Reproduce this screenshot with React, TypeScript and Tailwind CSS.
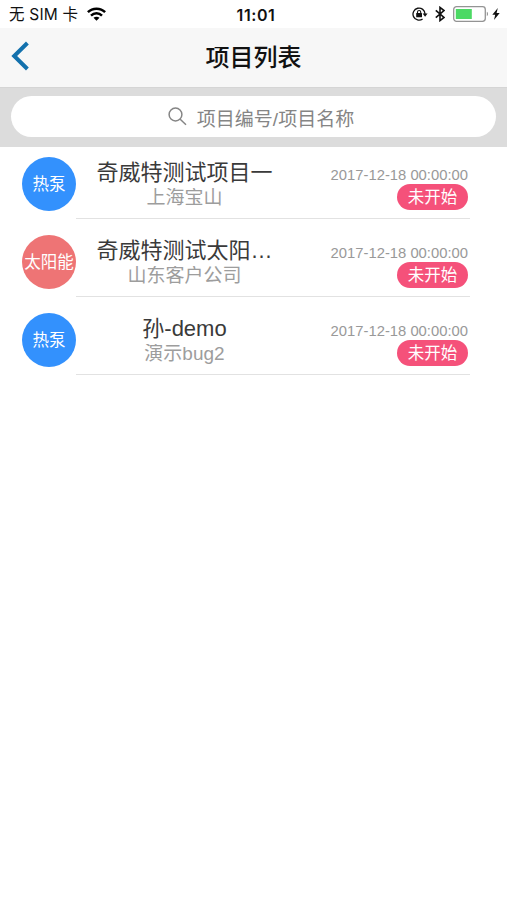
import clsx from "clsx";

type ProjectType = {
  kind: string;
  kindColor: string;
  name: string;
  customer: string;
  date: string;
  status: string;
};

const projects: ProjectType[] = [
  {
    kind: "热泵",
    kindColor: "bg-[#3391fd]",
    name: "奇威特测试项目一",
    customer: "上海宝山",
    date: "2017-12-18 00:00:00",
    status: "未开始",
  },
  {
    kind: "太阳能",
    kindColor: "bg-[#ee7475]",
    name: "奇威特测试太阳…",
    customer: "山东客户公司",
    date: "2017-12-18 00:00:00",
    status: "未开始",
  },
  {
    kind: "热泵",
    kindColor: "bg-[#3391fd]",
    name: "孙-demo",
    customer: "演示bug2",
    date: "2017-12-18 00:00:00",
    status: "未开始",
  },
];

const WifiIcon = () => (
  <svg width="19" height="14" viewBox="0 0 19 14" fill="none" stroke="#000" strokeWidth="2.5">
    <path d="M.9 5.2C5.6.5 13.4.5 18.1 5.2" />
    <path d="M4 8.6C7.2 5.5 11.8 5.5 15 8.6" />
    <path d="M9.5 13.7 6.5 10.8c1.7-1.5 4.3-1.5 6 0Z" fill="#000" stroke="none" />
  </svg>
);

const RotationLockIcon = () => (
  <svg width="16" height="14" viewBox="0 0 16 14" fill="none" stroke="#111" strokeWidth="1.3">
    <path d="M10.6 11.9A6 6 0 1 1 13 7" />
    <path d="M10.6 6.5h5L13.1 9.7Z" fill="#111" stroke="none" />
    <rect x="4.2" y="6" width="5.8" height="4.3" rx=".5" fill="#111" stroke="none" />
    <path d="M5.5 6.5V5.1a1.6 1.6 0 0 1 3.2 0v1.4" strokeWidth="1.1" />
  </svg>
);

const BluetoothIcon = () => (
  <svg width="10" height="16" viewBox="0 0 10 16" fill="none" stroke="#111" strokeWidth="1.6">
    <path d="M.8 4.3 9 11.5 5 14.6V1.4L9 4.5.8 11.7" />
  </svg>
);

const BatteryIcon = () => (
  <svg width="36" height="16" viewBox="0 0 36 16">
    <rect x=".7" y=".7" width="31.6" height="14.6" rx="2.8" fill="#fff" stroke="#949494" strokeWidth="1.3" />
    <rect x="2.8" y="3" width="16" height="10" fill="#4cd964" />
    <path d="M33.8 5.8c1.6.6 1.6 3.8 0 4.4Z" fill="#949494" />
  </svg>
);

const BoltIcon = () => (
  <svg width="8" height="12" viewBox="0 0 8 12">
    <path d="M5.8 0 .3 6.7h2.9L2 12l5.7-7H4.6Z" fill="#111" />
  </svg>
);

const StatusBar = () => (
  <div className="grid h-7 grid-cols-3 items-center text-[#111]">
    <div className="flex items-center pl-[9px]">
      <span className="pt-[2px] font-['Inter','Noto_Sans_CJK_SC',sans-serif] text-[15.5px] leading-5 tracking-[0.2px] whitespace-nowrap">
        无 SIM 卡
      </span>
      <span className="ml-[9px]">
        <WifiIcon />
      </span>
    </div>
    <span className="pt-[2px] pl-[5px] text-center font-['Inter'] text-[16px] leading-5 font-semibold tracking-[0.6px]">
      11:01
    </span>
    <div className="flex items-center justify-end pr-[7px]">
      <RotationLockIcon />
      <span className="ml-[7px]">
        <BluetoothIcon />
      </span>
      <span className="ml-2">
        <BatteryIcon />
      </span>
      <span className="ml-[3px]">
        <BoltIcon />
      </span>
    </div>
  </div>
);

const NavBar = () => (
  <header className="grid h-[59px] grid-cols-[1fr_auto_1fr] items-center bg-[#f7f7f7]">
    <button type="button" aria-label="返回" className="w-8 pb-1 pl-[11px]">
      <svg width="19" height="30" viewBox="0 0 19 30" fill="none" stroke="#1371ad" strokeWidth="4">
        <path d="M16.4 2 3.2 15l13.2 13" />
      </svg>
    </button>
    <h1 className="text-[24px] leading-8 font-medium text-[#111]">项目列表</h1>
  </header>
);

const SearchBar = () => (
  <div className="h-[60px] border-t border-[#d5d5d5] bg-[#dcdcdc] pt-2 pr-[11px] pl-[11px]">
    <div className="flex h-[41px] items-center justify-center rounded-full bg-white pl-[15px] text-[#858585]">
      <svg width="19" height="19" viewBox="0 0 19 19" fill="none" stroke="currentColor" strokeWidth="1.5">
        <circle cx="7.5" cy="7.5" r="6.4" />
        <path d="m12.2 12.2 5.8 5.6" />
      </svg>
      <span className="ml-[10px] pt-[6px] text-[19px] leading-6">项目编号/项目名称</span>
    </div>
  </div>
);

const ProjectRow = ({ kind, kindColor, name, customer, date, status }: ProjectType) => (
  <li className="flex h-[62px]">
    <div
      className={clsx(
        "flex size-[54px] shrink-0 items-center justify-center rounded-full text-[16.5px] whitespace-nowrap text-white",
        kindColor
      )}
    >
      {kind}
    </div>
    <div className="flex flex-1 justify-between border-b border-[#e2e2e2] pr-[2px] pl-5">
      <div className="w-[177px] pt-px text-center">
        <h2 className="truncate text-[22px] leading-[30px] text-[#3a3a3a]">{name}</h2>
        <p className="truncate text-[19px] leading-5 text-[#9d9d9d]">{customer}</p>
      </div>
      <div className="flex flex-col items-end pt-[9px]">
        <span className="text-[14.8px] leading-[18px] whitespace-nowrap text-[#999]">{date}</span>
        <span className="flex h-[26px] w-[71px] items-center justify-center rounded-full bg-[#f5517a] text-[16.5px] text-white">
          {status}
        </span>
      </div>
    </div>
  </li>
);

export default function App() {
  return (
    <div className="h-[900px] w-[507px] overflow-hidden bg-white font-['Liberation_Sans','Noto_Sans_CJK_SC',sans-serif]">
      <StatusBar />
      <NavBar />
      <SearchBar />
      <ul className="flex flex-col gap-4 pt-[10px] pr-[37px] pl-[22px]">
        {projects.map((project) => (
          <ProjectRow key={project.name} {...project} />
        ))}
      </ul>
    </div>
  );
}
